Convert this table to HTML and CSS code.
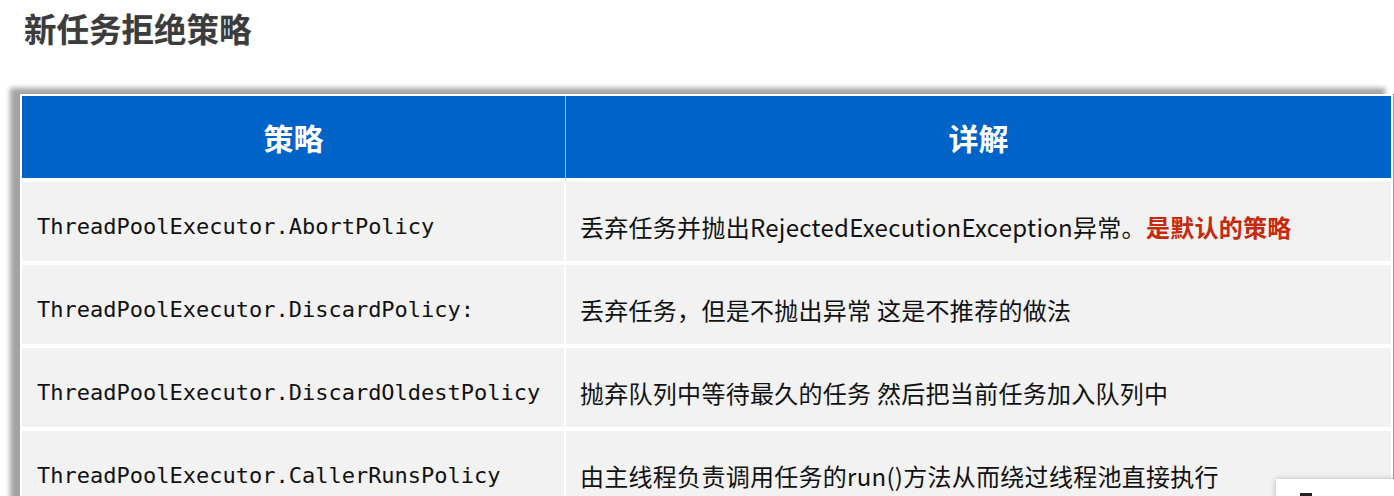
FILE: index.html
```html
<!DOCTYPE html>
<html lang="zh">
<head>
<meta charset="utf-8">
<link rel="stylesheet" href="styles.css">
</head>
<body>
<h1 class="title">新任务拒绝策略</h1>
<div class="frame">
  <table class="policy">
    <thead>
      <tr><th class="c1">策略</th><th class="c2">详解</th></tr>
    </thead>
    <tbody>
      <tr>
        <td class="code">ThreadPoolExecutor.AbortPolicy</td>
        <td class="desc">丢弃任务并抛出RejectedExecutionException异常。<strong class="hl">是默认的策略</strong></td>
      </tr>
      <tr>
        <td class="code">ThreadPoolExecutor.DiscardPolicy:</td>
        <td class="desc">丢弃任务，但是不抛出异常 这是不推荐的做法</td>
      </tr>
      <tr>
        <td class="code">ThreadPoolExecutor.DiscardOldestPolicy</td>
        <td class="desc">抛弃队列中等待最久的任务 然后把当前任务加入队列中</td>
      </tr>
      <tr>
        <td class="code">ThreadPoolExecutor.CallerRunsPolicy</td>
        <td class="desc">由主线程负责调用任务的run()方法从而绕过线程池直接执行</td>
      </tr>
    </tbody>
  </table>
</div>
<div class="popup"><span class="popup-bar"></span></div>
</body>
</html>
```

FILE: styles.css
```css
html, body {
  margin: 0;
  padding: 0;
  background: #ffffff;
  overflow: hidden;
}
body {
  width: 1394px;
  height: 496px;
  position: relative;
  font-family: "Noto Sans CJK SC", sans-serif;
}
.title {
  margin: 12px 0 0 24px;
  font-size: 32.5px;
  line-height: 32px;
  font-weight: 700;
  color: #3c3c3c;
  text-shadow: 0 0 1px rgba(0,0,0,0.25);
}
.frame {
  margin: 50px 0 0 20px;
  width: 1369px;
  padding: 2px;
  background: #ffffff;
  border-right: 2px solid #9a9a9a;
  box-shadow: -10px -6px 5px rgba(0,0,0,0.36);
}
.policy {
  width: 100%;
  border-collapse: separate;
  border-spacing: 0;
  table-layout: fixed;
}
.policy th {
  background: #0063c8;
  color: #ffffff;
  font-size: 30px;
  font-weight: 700;
  height: 82px;
  padding: 0;
  text-align: center;
  vertical-align: middle;
  border-bottom: 4px solid #ffffff;
}
.policy th.c1 {
  width: 543px;
  border-right: 1px solid #8fbbe8;
}
.policy td {
  background: #f2f2f2;
  height: 70px;
  padding: 9px 0 0 0;
  vertical-align: middle;
  border-bottom: 4px solid #ffffff;
  color: #111111;
}
.policy td.code {
  font-family: "DejaVu Sans Mono", "Liberation Mono", monospace;
  font-size: 22px;
  padding-left: 15px;
  border-right: 2px solid #ffffff;
}
.policy td.desc {
  font-size: 24px;
  letter-spacing: 0.28px;
  padding-left: 14px;
  font-family: "Noto Sans CJK SC", sans-serif;
}
.hl {
  color: #c8290a;
  font-weight: 700;
}
.popup {
  position: absolute;
  left: 1276px;
  top: 479px;
  width: 130px;
  height: 40px;
  background: #ffffff;
  box-shadow: 0 0 6px rgba(0,0,0,0.25);
}
.popup-bar {
  position: absolute;
  left: 24px;
  top: 14px;
  width: 12px;
  height: 3px;
  background: #222222;
}
```
